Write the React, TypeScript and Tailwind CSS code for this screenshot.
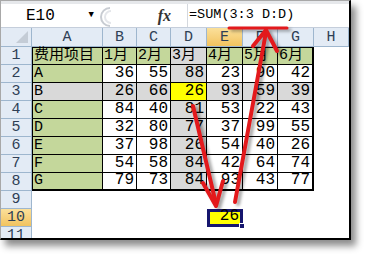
import React from "react"

// ─── Sheet data ──────────────────────────────────────────────────────────────

const COLS = ["A", "B", "C", "D", "E", "F", "G", "H"]

const ROWS: (string | number)[][] = [
  ["费用项目", "1月", "2月", "3月", "4月", "5月", "6月"],
  ["A", 36, 55, 88, 23, 90, 42],
  ["B", 26, 66, 26, 93, 59, 39],
  ["C", 84, 40, 81, 53, 22, 43],
  ["D", 32, 80, 77, 37, 99, 55],
  ["E", 37, 98, 26, 54, 40, 26],
  ["F", 54, 58, 84, 42, 64, 74],
  ["G", 79, 73, 84, 93, 43, 77],
]

const MONO = "font-['Liberation_Mono','Noto_Sans_CJK_SC',monospace]"

function fill(r: number, c: number) {
  if (r === 3 && c === 3) return "bg-[#ffff00]"
  if (r === 3 || c === 3) return "bg-[#d9d9d9]"
  if (r === 1 || c === 0) return "bg-[#c4d79b]"
  return "bg-white"
}

function edges(r: number, c: number) {
  return [
    "border-black",
    c === 6 ? "border-r-2" : "border-r",
    r === 8 ? "border-b-2" : "border-b",
    r === 1 ? "border-t" : "",
    c === 0 ? "border-l" : "",
  ].join(" ")
}

// ─── Pieces ──────────────────────────────────────────────────────────────────

function RowHead({ n }: { n: number }) {
  const on = n === 10
  return (
    <div
      className={`flex items-center justify-center border-r border-b border-[#9eb6ce] text-[15px] leading-none text-[#2f3f55] ${MONO} ${
        on ? "bg-gradient-to-b from-[#fbe09a] to-[#f2c35e]" : "bg-[#e3ebf5]"
      }`}
    >
      {n}
    </div>
  )
}

function FormulaBar() {
  return (
    <div className="h-[27px] flex items-stretch bg-white border-b border-[#c5cedb] border-t-[3px] border-t-[#e6e8eb]">
      <div className={`w-[98px] flex items-center pl-[25px] text-[16px] text-black ${MONO}`}>
        E10
        <span className="ml-auto mr-[5px] text-[9px]">▼</span>
      </div>
      <svg width="14" height="24" viewBox="0 0 14 24" className="mt-[1px]">
        <path d="M11 3 A9 9 0 0 0 11 21" fill="none" stroke="#c8ccd2" strokeWidth="2" />
        <path d="M12 6 A6 6 0 0 0 12 18" fill="none" stroke="#e4e6ea" strokeWidth="2" />
      </svg>
      <div className="w-[74px] flex items-center justify-end pr-[16px] font-['Liberation_Serif',serif] italic font-bold text-[16px] text-[#333]">
        fx
      </div>
      <div className="w-px bg-[#d4d8de]" />
      <div className={`flex items-center pl-[1px] text-[13.5px] text-black ${MONO}`}>=SUM(3:3 D:D)</div>
    </div>
  )
}

function Arrows() {
  return (
    <svg
      width="371"
      height="260"
      className="absolute top-0 left-0 pointer-events-none drop-shadow-[3px_2px_1.5px_rgba(0,0,0,0.35)]"
    >
      <g stroke="#e3191c" strokeWidth="4" strokeLinecap="round" fill="none">
        <line x1="229" y1="28" x2="287" y2="28" strokeWidth="3" />
        <line x1="235" y1="202" x2="266" y2="32" />
        <polyline points="253,46 266,30 277,51" strokeLinejoin="round" />
        <line x1="193" y1="106" x2="216" y2="204" />
        <polyline points="203,183 216,206 223,181" strokeLinejoin="round" />
      </g>
    </svg>
  )
}

// ─── Component ───────────────────────────────────────────────────────────────

export default function App() {
  return (
    <div className="relative w-[371px] h-[260px] bg-white overflow-hidden">
      <div className="w-[351px] h-[240px] flex flex-col overflow-hidden bg-white border-l border-t border-[#a8a8a8] border-r-2 border-b-2 border-r-black border-b-black shadow-[5px_6px_7px_rgba(0,0,0,0.45)]">
        <FormulaBar />

        <div className="grid grid-cols-[31px_71px_34px_34px_36px_36px_35px_36px_1fr] grid-rows-[19px_repeat(11,18px)]">
          {/* corner + column heads */}
          <div className="relative bg-[#e3ebf5] border-r border-b border-[#9eb6ce]">
            <span className="absolute right-[3px] bottom-[3px] w-0 h-0 border-l-[12px] border-l-transparent border-b-[12px] border-b-[#c4ccd6]" />
          </div>
          {COLS.map((c) => (
            <div
              key={c}
              className={`flex items-center justify-center border-r border-b border-[#9eb6ce] text-[15px] leading-none text-[#2f3f55] ${MONO} ${
                c === "E" ? "bg-gradient-to-b from-[#fbe09a] to-[#f2c35e]" : "bg-[#e3ebf5]"
              }`}
            >
              {c}
            </div>
          ))}

          {/* table rows 1-8 */}
          {ROWS.map((row, i) => {
            const r = i + 1
            return (
              <React.Fragment key={r}>
                <RowHead n={r} />
                {row.map((v, c) => (
                  <div
                    key={c}
                    className={`flex items-end pb-[1px] leading-none text-black ${fill(r, c)} ${edges(r, c)} ${
                      typeof v === "number" ? `justify-end pr-[2px] text-[16px] ${MONO}` : `pl-[1px] text-[15px] ${MONO}`
                    }`}
                  >
                    {v}
                  </div>
                ))}
                <div className="bg-white" />
              </React.Fragment>
            )
          })}

          {/* empty rows 9-11 */}
          {[9, 10, 11].map((r) => (
            <React.Fragment key={r}>
              <RowHead n={r} />
              {COLS.map((c) =>
                r === 10 && c === "E" ? (
                  <div
                    key={c}
                    className={`relative flex items-end justify-end pr-[1px] leading-none bg-[#ffff00] border-[3px] border-[#16166e] text-[16px] text-black ${MONO}`}
                  >
                    26
                    <span className="absolute -right-[5px] -bottom-[5px] w-[6px] h-[6px] bg-[#16166e] border border-white" />
                  </div>
                ) : (
                  <div key={c} className="bg-white" />
                )
              )}
            </React.Fragment>
          ))}
        </div>
      </div>

      <Arrows />
    </div>
  )
}
